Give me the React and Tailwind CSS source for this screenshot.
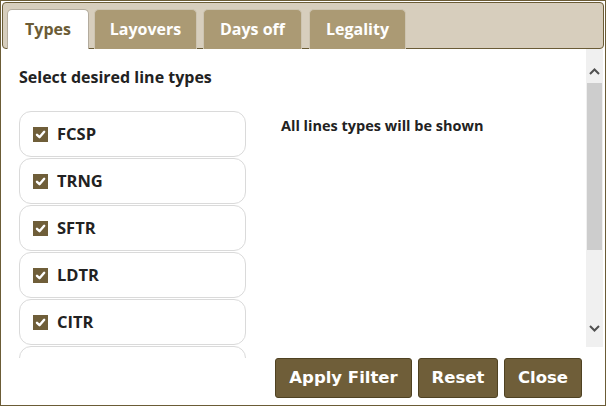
import React from "react";

const types = ["FCSP", "TRNG", "SFTR", "LDTR", "CITR", "XXXX"];
const tabs = [
  { label: "Types", active: true, w: "w-[82px]" },
  { label: "Layovers", w: "w-[103px]" },
  { label: "Days off", w: "w-[99px]" },
  { label: "Legality", w: "w-[97px]" },
];

function Check() {
  return (
    <span className="flex h-[15px] w-[15px] shrink-0 items-center justify-center bg-[#6f5e39]">
      <svg width="11" height="11" viewBox="0 0 11 11">
        <path d="M2 5.8 L4.5 8.2 L9.2 2.8" fill="none" stroke="white" strokeWidth="2.4" strokeLinecap="round" strokeLinejoin="round" />
      </svg>
    </span>
  );
}

export default function App() {
  return (
    <div
      className="flex h-[406px] w-[606px] flex-col overflow-hidden border border-[#6b5c36] bg-white"
      style={{ fontFamily: '"Open Sans", "Noto Sans", sans-serif' }}
    >
      <div className="mx-[1px] mt-[1px] flex h-[47px] shrink-0 items-end gap-[5px] rounded-[4px] border border-[#6b5c36] bg-[#d7cebd] pl-[4px]">
        {tabs.map((t, i) => (
          <div
            key={t.label}
            className={
              "-mb-[1px] flex h-[40px] items-center justify-center rounded-t-[5px] border border-b-0 pb-[2px] text-[16px] font-bold " +
              t.w +
              (i === 2 ? " ml-[1px]" : "") +
              (i === 3 ? " ml-[2px]" : "") +
              (t.active
                ? " border-[#b3ab9d] bg-white text-[#6b5c36]"
                : " border-[#cdc4b1] bg-[#ab9a74] text-white")
            }
          >
            {t.label}
          </div>
        ))}
      </div>

      <div className="flex h-[309px] shrink-0">
        <div className="flex-1 overflow-hidden pl-[18px]">
          <div className="pt-[16px] text-[16px] font-bold leading-[24px] text-[#222]">Select desired line types</div>
          <div className="mt-[22px] flex gap-[35px]">
            <div className="flex w-[227px] flex-col gap-[1px]">
              {types.map((t, i) => (
                <div
                  key={t}
                  className="flex h-[46px] shrink-0 items-center gap-[9px] rounded-[12px] border border-[#dadada] pl-[13px] text-[16.5px] font-bold text-[#222]"
                >
                  {i < 5 && <Check />}
                  {i < 5 && <span>{t}</span>}
                </div>
              ))}
            </div>
            <div className="pt-[5px] text-[14.5px] font-bold leading-[20px] text-[#222]">All lines types will be shown</div>
          </div>
        </div>
        <div className="mr-[2px] flex h-[298px] w-[17px] flex-col items-center bg-[#f0f0f0]">
          <div className="flex h-[34px] items-center pt-[10px]">
            <svg width="11" height="7" viewBox="0 0 11 7">
              <path d="M1 6 L5.5 1.5 L10 6" fill="none" stroke="#505050" strokeWidth="2" />
            </svg>
          </div>
          <div className="h-[167px] w-[15px] bg-[#cdcdcd]" />
          <div className="flex-1" />
          <div className="flex h-[24px] items-start pt-[2px]">
            <svg width="11" height="7" viewBox="0 0 11 7">
              <path d="M1 1 L5.5 5.5 L10 1" fill="none" stroke="#505050" strokeWidth="2" />
            </svg>
          </div>
        </div>
      </div>

      <div
        className="flex h-[40px] shrink-0 justify-end gap-[6px] pr-[23px] text-[16.5px] font-bold text-white"
        style={{ fontFamily: '"DejaVu Sans", Verdana, sans-serif' }}
      >
        <button className="w-[137px] rounded-[3px] border border-[#4f4222] bg-[#6f5e39]">Apply Filter</button>
        <button className="w-[80px] rounded-[3px] border border-[#4f4222] bg-[#6f5e39]">Reset</button>
        <button className="w-[78px] rounded-[3px] border border-[#4f4222] bg-[#6f5e39]">Close</button>
      </div>
    </div>
  );
}
